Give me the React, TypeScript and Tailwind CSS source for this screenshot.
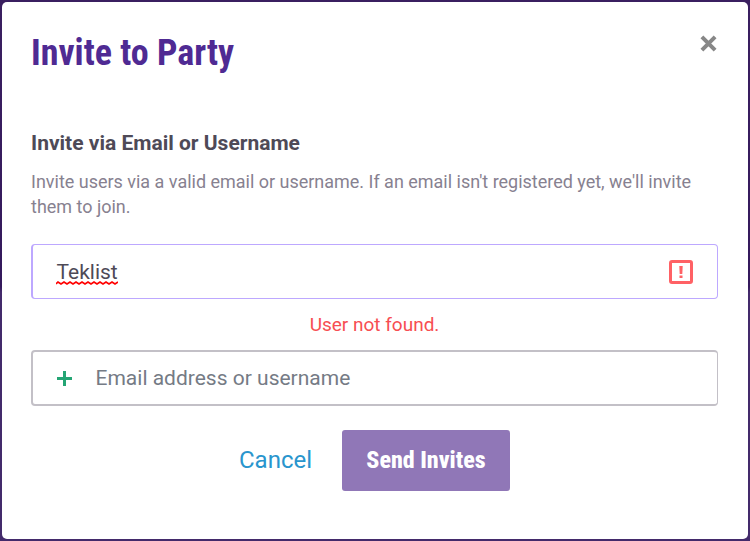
export default function App() {
  return (
    <div className="h-[541px] w-[750px] overflow-hidden bg-[linear-gradient(to_bottom,#3a1f60_0%,#34195c_53%,#432a6b_54%,#432a6b_100%)] p-[2px] font-['Roboto',sans-serif]">
      <div className="flex h-[537px] flex-col rounded-[5px] bg-white pt-[28px] pr-[30px] pl-[29px]">
        <header className="flex h-[46px] items-start justify-between">
          <h1 className="text-[36px] leading-[46px] font-bold whitespace-nowrap text-[#4f2a93] [font-stretch:75%]">Invite to Party</h1>
          <button aria-label="Close" className="mt-[5px] mr-[1px]">
            <svg width="17" height="17" viewBox="0 0 17 17" stroke="#878787" strokeWidth="4">
              <path d="M1.9 1.9 15.1 15.1M15.1 1.9 1.9 15.1" />
            </svg>
          </button>
        </header>
        <h2 className="mt-[55px] text-[21px] leading-[25px] font-bold text-[#4e4a57]">Invite via Email or Username</h2>
        <p className="mt-[13px] text-[17.98px] leading-[25px] text-[#878190]">
          Invite users via a valid email or username. If an email isn't registered yet, we'll invite
          <br />
          them to join.
        </p>
        <div className="mt-[25px] flex h-[55px] w-[687px] items-center justify-between rounded-[4px] border border-l-2 border-[#bda8ff] pr-[24px] pl-[23px]">
          <span className="relative pt-[2px] pl-[0.5px] text-[21px] leading-[25px] text-[#4e4a57]">
            Teklist
            <svg className="absolute top-[23px] left-0" width="62" height="4" viewBox="0 0 62 4" fill="none" stroke="#ff0000" strokeWidth="1.6">
              <path d="M0 3 2 1 5 3 8 1 11 3 14 1 17 3 20 1 23 3 26 1 29 3 32 1 35 3 38 1 41 3 44 1 47 3 50 1 53 3 56 1 59 3 62 1" />
            </svg>
          </span>
          <svg width="24" height="24" viewBox="0 0 24 24" fill="none">
            <rect x="1.5" y="1.5" width="21" height="21" rx="1.5" stroke="#ff6165" strokeWidth="3" />
            <path d="M10.3 6h3.4l-.4 8h-2.6zM10.5 15.5h3v2.5h-3z" fill="#ff6165" />
          </svg>
        </div>
        <p className="mt-[13px] text-center text-[19px] leading-[25px] text-[#f74e52]">User not found.</p>
        <div className="mt-[13px] flex h-[56px] w-[687px] items-center rounded-[4px] border-2 border-r border-[#c3c0c7] pl-[24px]">
          <svg width="15" height="15" viewBox="0 0 15 15" fill="#24a574">
            <path d="M6 0h3v6h6v3H9v6H6V9H0V6h6z" />
          </svg>
          <span className="ml-[23.5px] text-[21px] leading-[25px] text-[#757b85]">Email address or username</span>
        </div>
        <div className="mt-[24px] ml-[208px] flex items-center">
          <button className="w-[103px] pb-[2px] text-left text-[24px] leading-[30px] text-[#2995cd]">Cancel</button>
          <button className="h-[61px] w-[168px] rounded-[3px] bg-[#9077b7] pb-[2px] text-[24px] font-extrabold text-white [font-stretch:75%]">Send Invites</button>
        </div>
      </div>
    </div>
  );
}
